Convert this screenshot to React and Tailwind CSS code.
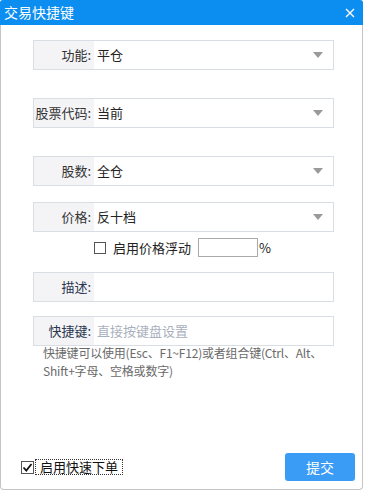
import React from 'react';

const font = { fontFamily: '"Noto Sans CJK SC", "Noto Sans", sans-serif' };

const Arrow = () => (
  <svg width="10" height="6" viewBox="0 0 10 6" className="mr-[10px]">
    <path d="M0 0 L10 0 L5 6 Z" fill="#9a9a9a" />
  </svg>
);

const Row = ({ label, value, select, placeholder, labelColor = 'text-[#333]', className = '' }) => (
  <div className={`flex h-[30px] border border-[#d9dde4] ${className}`}>
    <div className={`w-[60px] shrink-0 bg-[#f4f4f6] flex items-center justify-end pr-[3px] text-[13px] ${labelColor}`}>
      {label}
    </div>
    <div className="flex-1 flex items-center justify-between pl-[3px]">
      {placeholder ? (
        <span className="text-[13px] text-[#a9b0bd]">{placeholder}</span>
      ) : (
        <span className="text-[13px] text-[#222]">{value}</span>
      )}
      {select && <Arrow />}
    </div>
  </div>
);

const App = () => {
  return (
    <div className="w-[365px] h-[490px] bg-white overflow-hidden" style={font}>
      <div className="w-[363px] h-[490px] flex flex-col border-l border-r border-b border-[#c4c4c4] rounded-b-[4px] rounded-t-[3px]">
        <div className="h-[25px] bg-[#0c8ef0] flex items-center justify-between pl-[4px] pr-[8px] rounded-t-[3px] -mx-px">
          <span className="text-white text-[14px]">交易快捷键</span>
          <svg width="10" height="10" viewBox="0 0 10 10">
            <path d="M1 1 L9 9 M9 1 L1 9" stroke="white" strokeWidth="1.4" />
          </svg>
        </div>

        <div className="pt-[15px] pl-[32px] pr-[28px]">
          <Row label="功能:" value="平仓" select />
          <Row label="股票代码:" value="当前" select className="mt-[28px]" />
          <Row label="股数:" value="全仓" select className="mt-[28px]" />
          <Row label="价格:" value="反十档" select className="mt-[16px]" />

          <div className="mt-[6px] h-[19px] flex items-center pl-[61px]">
            <span className="w-[12px] h-[12px] border border-[#555] bg-white"></span>
            <span className="ml-[7px] text-[13px] text-[#222]">启用价格浮动</span>
            <span className="ml-[7px] w-[60px] h-[19px] border border-[#aaa] bg-white"></span>
            <span className="ml-[1px] text-[13px] text-[#222]">%</span>
          </div>

          <Row label="描述:" value="" labelColor="text-[#2a3650]" className="mt-[15px]" />
          <Row label="快捷键:" placeholder="直接按键盘设置" labelColor="text-[#2a3650]" className="mt-[14px]" />

          <div className="-mt-[2px] pl-[10px] text-[12px] leading-[18px] text-[#6a6a6a] whitespace-nowrap tracking-[-0.2px]">
            <div>快捷键可以使用(Esc、F1~F12)或者组合键(Ctrl、Alt、</div>
            <div>Shift+字母、空格或数字)</div>
          </div>
        </div>

        <div className="mt-auto flex items-center justify-between pl-[20px] pr-[7px] pb-[8px]">
          <div className="flex items-center">
            <span className="w-[13px] h-[13px] border border-[#555] bg-white flex items-center justify-center">
              <svg width="11" height="11" viewBox="0 0 11 11">
                <path d="M1.5 5.5 L4.3 8.5 L9.5 2" stroke="#111" strokeWidth="1.8" fill="none" />
              </svg>
            </span>
            <span className="ml-[1px] border border-dotted border-[#333] px-[4px] text-[13px] leading-[14px] text-[#111]">
              启用快速下单
            </span>
          </div>
          <button className="w-[70px] h-[28px] rounded-[3px] bg-[#3b9cf6] text-white text-[14px]">提交</button>
        </div>
      </div>
    </div>
  );
};

export default App;
